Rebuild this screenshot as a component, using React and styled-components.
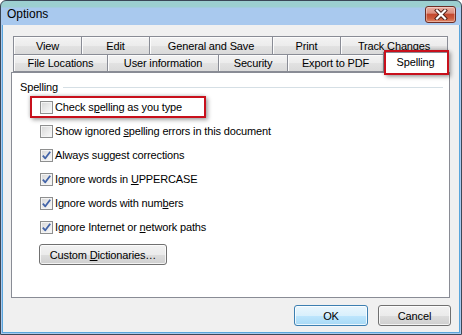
import React from 'react';
import styled, { createGlobalStyle } from 'styled-components';

const Global = createGlobalStyle`
  html, body { margin: 0; padding: 0; background: #fff; }
  body { font-family: "Liberation Sans", Arial, sans-serif; font-size: 11px; color: #000; }
  * { box-sizing: border-box; }
`;

const Window = styled.div`
  width: 462px;
  height: 335px;
  border: 1px solid #3b4757;
  border-radius: 6px 6px 0 0;
  background: linear-gradient(#9ccfd0 0, #9ccfd0 6px, #a9c9ee 7px, #a9c9ee 100%);
  display: flex;
  flex-direction: column;
  padding: 0 1px 1px 1px;
  overflow: hidden;
`;

const TitleBar = styled.div`
  height: 24px;
  flex: none;
  display: flex;
  align-items: center;
  padding: 0 4px 0 5px;
`;

const Title = styled.div`
  flex: 1;
  font-size: 12px;
  padding-top: 2px;
`;

const CloseBtn = styled.div`
  width: 31px;
  height: 17px;
  margin-top: 2px;
  border: 1px solid #6d2d25;
  border-radius: 3px;
  background: linear-gradient(#eab0a2 0%, #dc8f7f 40%, #c4482f 50%, #cc5a3c 75%, #e08a6a 100%);
  box-shadow: inset 0 0 0 1px rgba(255, 255, 255, 0.35);
  display: flex;
  align-items: center;
  justify-content: center;
`;

const Body = styled.div`
  flex: 1;
  background: #f0f0f0;
  border: 1px solid #5aa6dc;
  border-top: none;
  padding: 11px 9px 0 8px;
  display: flex;
  flex-direction: column;
`;

const TabStrip = styled.div`
  margin: 0 2px 0 2px;
  display: flex;
  flex-direction: column;
  position: relative;
  z-index: 2;
`;

const TabRow = styled.div`
  display: flex;
  align-items: flex-end;
  height: ${(p) => p.$h}px;
`;

const Tab = styled.div`
  position: relative;
  width: ${(p) => p.$w}px;
  height: ${(p) => (p.$active ? 21 : p.$h)}px;
  margin-left: ${(p) => (p.$first ? 0 : -1)}px;
  margin-bottom: ${(p) => (p.$active ? -1 : 0)}px;
  border: 1px solid #898c95;
  border-bottom: ${(p) => (p.$active || p.$top ? 'none' : '1px solid #898c95')};
  background: ${(p) =>
    p.$active ? '#fff' : 'linear-gradient(#f3f3f3 0%, #ececec 50%, #e2e2e2 51%, #dadada 100%)'};
  box-shadow: ${(p) => (p.$active ? 'none' : 'inset 1px 1px 0 #fcfcfc')};
  display: flex;
  align-items: ${(p) => (p.$active ? 'flex-start' : 'center')};
  padding-top: ${(p) => (p.$active ? 3 : 0)}px;
  justify-content: center;
  white-space: nowrap;
  letter-spacing: -0.15px;
  z-index: ${(p) => (p.$active ? 3 : 1)};
`;

const Highlight = styled.div`
  position: absolute;
  border: 2px solid #c8101c;
  box-shadow: 2px 2px 4px rgba(0, 0, 0, 0.35), -1px -1px 3px rgba(0, 0, 0, 0.15);
  pointer-events: none;
  top: ${(p) => p.$top}px;
  left: ${(p) => p.$left}px;
  width: ${(p) => p.$w}px;
  height: ${(p) => p.$h}px;
`;

const Panel = styled.div`
  height: 226px;
  flex: none;
  background: #fff;
  border: 1px solid #898c95;
  padding: 7px 6px 0 8px;
  position: relative;
  z-index: 1;
`;

const GroupHeader = styled.div`
  height: 14px;
  display: flex;
  align-items: center;
  gap: 5px;
  letter-spacing: -0.15px;
`;

const GroupLine = styled.div`
  flex: 1;
  height: 1px;
  background: #d5dfe5;
`;

const List = styled.div`
  margin-top: 1px;
  padding-left: 20px;
  display: flex;
  flex-direction: column;
`;

const Row = styled.div`
  position: relative;
  height: 24px;
  display: flex;
  align-items: center;
  gap: 2px;
  letter-spacing: -0.15px;
  white-space: nowrap;
`;

const Box = styled.div`
  width: 13px;
  height: 13px;
  flex: none;
  border: 1px solid #8e8f8f;
  background: linear-gradient(135deg, #d6d6d6 0%, #ebebeb 55%, #fafafa 100%);
  box-shadow: inset 0 0 0 1px #f4f4f4;
  display: flex;
  align-items: center;
  justify-content: center;
`;

const Button = styled.div`
  width: ${(p) => p.$w}px;
  height: 21px;
  border: 1px solid ${(p) => (p.$primary ? '#3c7fb1' : '#707070')};
  border-radius: 3px;
  background: ${(p) =>
    p.$primary
      ? 'linear-gradient(#eaf6fd 0%, #d9f0fc 50%, #bee6fd 51%, #a7d9f5 100%)'
      : 'linear-gradient(#f2f2f2 0%, #ebebeb 50%, #dddddd 51%, #cfcfcf 100%)'};
  box-shadow: inset 0 0 0 1px rgba(255, 255, 255, 0.75);
  display: flex;
  align-items: center;
  justify-content: center;
  letter-spacing: -0.15px;
  white-space: nowrap;
`;

const DictButton = styled(Button)`
  margin-top: 5px;
  margin-left: -1px;
`;

const ButtonRow = styled.div`
  margin-top: 7px;
  margin-right: -1px;
  display: flex;
  justify-content: flex-end;
  gap: 10px;
`;

const Check = () => (
  <svg width="11" height="11" viewBox="0 0 11 11">
    <path d="M1.8 5.6 L4.3 8.3 L9.2 1.8" fill="none" stroke="#4364a8" strokeWidth="1.8" strokeLinejoin="round" />
  </svg>
);

const CloseGlyph = () => (
  <svg width="14" height="11" viewBox="0 0 14 11">
    <path d="M3 1.5 L11 9.5 M11 1.5 L3 9.5" stroke="#4a1d16" strokeWidth="4" strokeLinecap="square" />
    <path d="M3 1.5 L11 9.5 M11 1.5 L3 9.5" stroke="#fff" strokeWidth="2.2" strokeLinecap="square" />
  </svg>
);

const row1 = [
  ['View', 69],
  ['Edit', 69],
  ['General and Save', 124],
  ['Print', 69],
  ['Track Changes', 108],
];
const row2 = [
  ['File Locations', 95],
  ['User information', 112],
  ['Security', 70],
  ['Export to PDF', 97],
];

const options = [
  { label: <>Check s<u>p</u>elling as you type</>, checked: false, mark: true },
  { label: <>Show ignored <u>s</u>pelling errors in this document</>, checked: false },
  { label: <>Always suggest corrections</>, checked: true },
  { label: <>Ignore words in <u>U</u>PPERCASE</>, checked: true },
  { label: <>Ignore words with num<u>b</u>ers</>, checked: true },
  { label: <>Ignore Internet or <u>n</u>etwork paths</>, checked: true },
];

export default function App() {
  return (
    <>
      <Global />
      <Window>
        <TitleBar>
          <Title>Options</Title>
          <CloseBtn>
            <CloseGlyph />
          </CloseBtn>
        </TitleBar>
        <Body>
          <TabStrip>
            <TabRow $h={18}>
              {row1.map(([t, w], i) => (
                <Tab key={t} $w={w} $h={18} $first={i === 0} $top>
                  {t}
                </Tab>
              ))}
            </TabRow>
            <TabRow $h={18}>
              {row2.map(([t, w], i) => (
                <Tab key={t} $w={w} $h={18} $first={i === 0}>
                  {t}
                </Tab>
              ))}
              <Tab $w={65} $active>
                Spelling
                <Highlight $top={-3} $left={0} $w={65} $h={25} />
              </Tab>
            </TabRow>
          </TabStrip>
          <Panel>
            <GroupHeader>
              Spelling
              <GroupLine />
            </GroupHeader>
            <List>
              {options.map((o, i) => (
                <Row key={i}>
                  <Box>{o.checked && <Check />}</Box>
                  <span>{o.label}</span>
                  {o.mark && <Highlight $top={1} $left={-10} $w={176} $h={22} />}
                </Row>
              ))}
              <DictButton $w={128}>
                <span>
                  Custom <u>D</u>ictionaries…
                </span>
              </DictButton>
            </List>
          </Panel>
          <ButtonRow>
            <Button $w={74} $primary>OK</Button>
            <Button $w={73}>Cancel</Button>
          </ButtonRow>
        </Body>
      </Window>
    </>
  );
}
